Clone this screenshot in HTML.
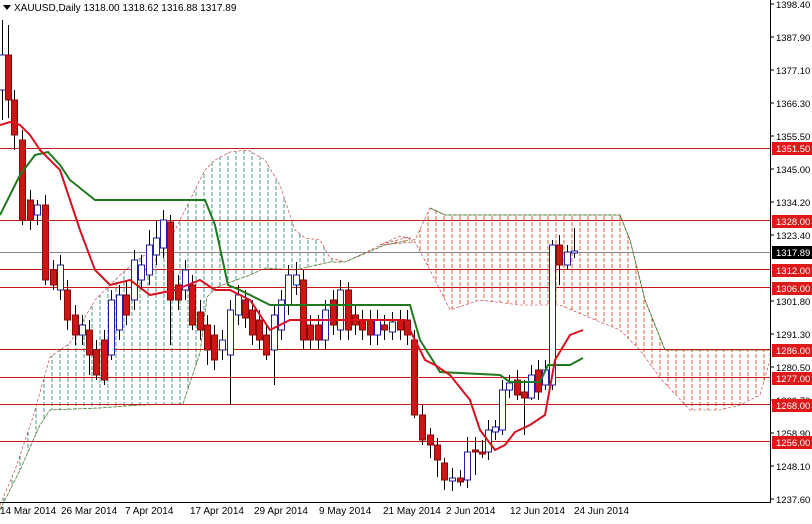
<!DOCTYPE html>
<html><head><meta charset="utf-8"><style>
body{margin:0;background:#fff;width:812px;height:519px;overflow:hidden;font-family:"Liberation Sans",sans-serif}
svg text{font-family:"Liberation Sans",sans-serif;font-size:10px}
#ax text{font-size:9.5px}
</style></head><body>
<svg id="c" width="812" height="519" viewBox="0 0 812 519" xmlns="http://www.w3.org/2000/svg">
<defs>
<pattern id="pg" width="8" height="6" patternUnits="userSpaceOnUse"><line x1="4" y1="0" x2="4" y2="4" stroke="#4a9a8a" stroke-width="1"/></pattern>
<pattern id="pr" width="8" height="6" patternUnits="userSpaceOnUse"><line x1="4" y1="0" x2="4" y2="4" stroke="#e0603a" stroke-width="1"/></pattern>
</defs>
<rect width="812" height="519" fill="#fff"/>
<polygon fill="url(#pg)" stroke="#c03030" stroke-width="0.6" stroke-dasharray="3,2" points="0,505 15,470 33,417 50,357 70,343 95,300 120,275 140,258 170,240 190,200 205,170 215,160 230,152 248,150 265,160 280,185 295,230 305,238 320,240 330,258 345,262 360,255 385,243 410,237 410,240 385,245 345,262 330,262 295,270 265,268 250,275 217,287 207,297 200,353 183,404 140,405 100,408 50,410 40,425 20,470 0,510"/>
<polyline fill="none" stroke="#3a9a3a" stroke-width="0.8" stroke-dasharray="3,2" points="0,510 20,470 40,425 50,410 100,408 140,405 183,404 200,353 207,297 217,287 250,275 265,268 295,270 330,262 345,262 385,245 410,240"/>
<polygon fill="url(#pr)" stroke="#c03030" stroke-width="0.6" stroke-dasharray="3,2" points="380,245 400,236 415,240 430,208 445,215 620,215 630,240 645,300 665,350 770,350 770,360 760,395 740,405 720,410 690,410 660,378 640,350 620,330 600,322 560,305 520,305 480,300 450,310 430,270 415,242"/>
<polyline fill="none" stroke="#2a8a2a" stroke-width="1" stroke-dasharray="3,2" points="430,208 445,215 620,215 630,240 645,300 665,350 770,350"/>
<g stroke="#c81818" stroke-width="1">
<line x1="0" y1="148.5" x2="770" y2="148.5"/><line x1="0" y1="220.5" x2="770" y2="220.5"/>
<line x1="0" y1="269.5" x2="770" y2="269.5"/><line x1="0" y1="287.5" x2="770" y2="287.5"/>
<line x1="0" y1="349.5" x2="770" y2="349.5"/><line x1="0" y1="377.5" x2="770" y2="377.5"/>
<line x1="0" y1="404.5" x2="770" y2="404.5"/><line x1="0" y1="441.5" x2="770" y2="441.5"/>
</g>
<line x1="0" y1="252.5" x2="770" y2="252.5" stroke="#888" stroke-width="1"/>
<g id="cd"></g>
<polyline fill="none" stroke="#1f7a1f" stroke-width="2" points="0,215 10,195 20,175 35,155 48,152 60,165 70,180 95,200 205,200 215,225 228,285 240,290 270,305 410,305 420,340 440,372 500,375 510,382 540,382 548,365 570,365 583,358"/>
<polyline fill="none" stroke="#d81020" stroke-width="2" points="0,125 10,122 20,125 30,135 40,150 60,170 80,230 95,270 110,285 130,280 150,295 175,290 200,280 215,290 230,290 250,300 270,330 290,320 330,320 380,320 405,320 415,340 425,360 435,365 450,375 470,400 480,430 495,450 505,445 515,432 530,425 545,415 555,360 570,335 583,330"/>
<line x1="770.5" y1="0" x2="770.5" y2="503" stroke="#000"/>
<line x1="0" y1="502.5" x2="771" y2="502.5" stroke="#000"/>
<g id="ax"></g>
<g fill="#000">
<text x="0" y="514">14 Mar 2014</text><text x="61" y="514">26 Mar 2014</text><text x="125" y="514">7 Apr 2014</text>
<text x="190" y="514">17 Apr 2014</text><text x="254" y="514">29 Apr 2014</text><text x="319" y="514">9 May 2014</text>
<text x="383" y="514">21 May 2014</text><text x="446" y="514">2 Jun 2014</text><text x="510" y="514">12 Jun 2014</text>
<text x="574" y="514">24 Jun 2014</text>
</g>
<rect x="0" y="0" width="240" height="14" fill="#fff"/>
<polygon points="3,5 11,5 7,10" fill="#000"/>
<text x="14" y="11" fill="#000">XAUUSD,Daily  1318.00 1318.62 1316.88 1317.89</text>
</svg>
<script>
var ns="http://www.w3.org/2000/svg";
function el(t,a,p){var e=document.createElementNS(ns,t);for(var k in a)e.setAttribute(k,a[k]);p.appendChild(e);return e;}
var cd=document.getElementById("cd");
var C=[[2,55,90,20,120,"b"],[8,55,100,25,118,"r"],[14,100,135,90,150,"r"],[22,140,220,130,225,"r"],[30,200,220,190,230,"r"],[37,205,215,200,225,"b"],[45,205,280,195,285,"r"],[53,270,285,260,290,"r"],[60,265,290,255,300,"b"],[67,290,320,280,330,"r"],[75,315,335,305,345,"r"],[82,325,335,315,345,"b"],[89,330,355,320,375,"r"],[96,350,375,340,380,"r"],[104,340,380,330,385,"r"],[111,300,355,290,360,"b"],[119,295,330,285,340,"b"],[126,295,315,280,325,"r"],[134,260,300,250,310,"b"],[141,265,280,255,290,"b"],[149,245,275,230,285,"b"],[156,238,255,220,265,"b"],[163,220,248,210,258,"b"],[170,222,300,215,345,"r"],[178,285,300,275,310,"r"],[185,270,290,260,300,"b"],[192,285,325,275,330,"r"],[200,312,330,300,340,"r"],[207,325,350,315,365,"r"],[214,335,360,325,370,"r"],[222,340,350,330,360,"b"],[230,310,355,300,405,"b"],[238,295,315,285,325,"b"],[245,300,318,290,328,"r"],[252,310,335,300,345,"r"],[259,320,340,310,350,"r"],[266,335,355,325,360,"r"],[274,315,350,305,385,"b"],[281,300,330,290,340,"b"],[288,275,305,265,315,"b"],[296,275,285,262,295,"b"],[303,280,340,270,350,"r"],[310,325,340,315,350,"r"],[318,325,340,315,350,"r"],[325,310,340,300,350,"b"],[333,300,325,290,335,"r"],[340,290,330,280,340,"b"],[348,290,330,282,340,"r"],[355,315,325,305,335,"r"],[362,320,330,310,340,"r"],[370,320,335,310,345,"r"],[377,320,335,310,345,"b"],[384,325,330,315,340,"r"],[392,322,332,312,340,"b"],[400,320,330,310,340,"r"],[407,320,335,310,345,"r"],[414,340,415,330,418,"r"],[422,415,440,405,445,"r"],[430,435,445,428,458,"r"],[437,445,460,438,477,"r"],[444,463,480,458,490,"r"],[452,478,481,468,491,"b"],[460,478,482,470,486,"r"],[467,452,480,437,488,"b"],[475,450,452,437,475,"r"],[482,452,454,440,458,"r"],[488,430,452,420,460,"b"],[495,427,432,420,440,"b"],[502,390,430,380,435,"b"],[509,383,390,375,398,"b"],[517,380,395,370,400,"r"],[524,392,398,380,435,"r"],[531,375,398,365,400,"b"],[538,370,392,360,400,"r"],[545,370,385,360,390,"b"],[552,245,385,240,390,"b"],[559,245,265,235,285,"r"],[567,252,265,245,270,"b"],[574,251,253,228,258,"b"]];
C.forEach(function(c){var x=c[0],o=Math.min(c[1],c[2]),h=Math.max(Math.abs(c[2]-c[1]),2),r=c[5]=="r";
el("line",{x1:x+0.5,y1:c[3],x2:x+0.5,y2:c[4],stroke:"#000","stroke-width":1},cd);
el("rect",{x:x-2.5,y:o,width:6,height:h,fill:r?"#cc1515":"#fff",stroke:r?"#8a0a0a":"#2020a0","stroke-width":1},cd);});
var ax=document.getElementById("ax");
[["1398.40",4],["1387.90",37],["1377.10",70],["1366.30",103],["1355.50",136],["1345.00",169],["1334.20",202],["1323.40",235],["1301.80",301],["1291.30",334],["1280.50",367],["1269.70",400],["1258.90",433],["1248.10",466],["1237.60",499]].forEach(function(a){
el("line",{x1:770,y1:a[1],x2:774,y2:a[1],stroke:"#000"},ax);var t=el("text",{x:776,y:a[1]+4,fill:"#000"},ax);t.textContent=a[0];});
[["1351.50",148,"#e01818"],["1328.00",221,"#e01818"],["1317.89",252,"#000"],["1312.00",270,"#e01818"],["1306.00",288,"#e01818"],["1286.00",350,"#e01818"],["1277.00",378,"#e01818"],["1268.00",405,"#e01818"],["1256.00",442,"#e01818"]].forEach(function(a){
el("rect",{x:772,y:a[1]-6,width:40,height:13,fill:a[2]},ax);var t=el("text",{x:776,y:a[1]+4,fill:"#fff"},ax);t.textContent=a[0];});
</script>
</body></html>
